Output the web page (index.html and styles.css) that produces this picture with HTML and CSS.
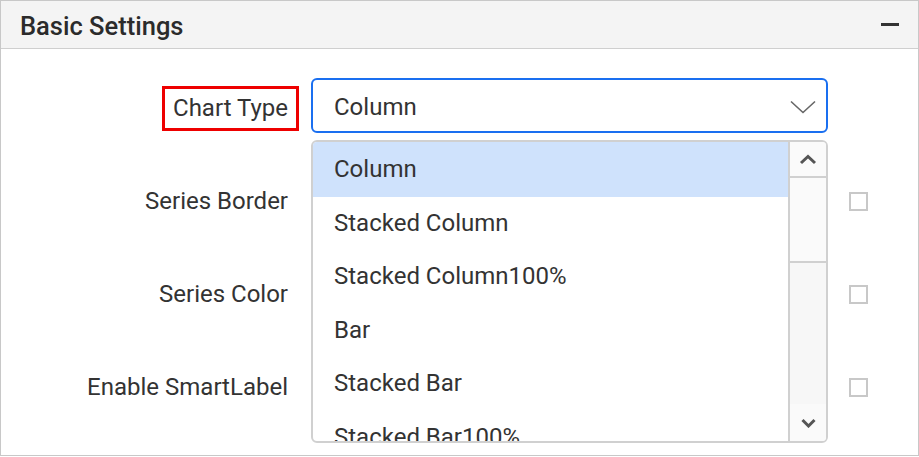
FILE: index.html
```html
<!DOCTYPE html>
<html>
<head>
<meta charset="utf-8">
<link rel="stylesheet" href="styles.css">
</head>
<body>
<div class="panel">
  <div class="panel-header">
    <span class="title">Basic Settings</span>
    <span class="collapse-icon"></span>
  </div>
  <div class="panel-body">
    <div class="row row-first">
      <div class="label-col"><span class="label label-marked">Chart Type</span></div>
      <div class="control">
        <div class="select">
          <span class="select-value">Column</span>
          <svg class="select-arrow" width="26" height="14" viewBox="0 0 26 14"><path d="M1 1.5 L13 12.5 L25 1.5" fill="none" stroke="#666" stroke-width="1.6"/></svg>
        </div>
        <div class="popup">
          <ul class="list">
            <li class="item item-active">Column</li>
            <li class="item">Stacked Column</li>
            <li class="item">Stacked Column100%</li>
            <li class="item">Bar</li>
            <li class="item">Stacked Bar</li>
            <li class="item">Stacked Bar100%</li>
          </ul>
          <div class="scrollbar">
            <div class="sb-btn sb-up">
              <svg width="18" height="11" viewBox="0 0 18 11"><path d="M2 9 L9 2.5 L16 9" fill="none" stroke="#555" stroke-width="3"/></svg>
            </div>
            <div class="sb-thumb"></div>
            <div class="sb-track"></div>
            <div class="sb-btn sb-down">
              <svg width="15" height="10" viewBox="0 0 15 10"><path d="M1.5 2 L7.5 8 L13.5 2" fill="none" stroke="#555" stroke-width="3"/></svg>
            </div>
          </div>
        </div>
      </div>
    </div>
    <div class="row">
      <div class="label-col"><span class="label">Series Border</span></div>
      <div class="control"></div>
      <span class="checkbox"></span>
    </div>
    <div class="row">
      <div class="label-col"><span class="label">Series Color</span></div>
      <div class="control"></div>
      <span class="checkbox"></span>
    </div>
    <div class="row">
      <div class="label-col"><span class="label">Enable SmartLabel</span></div>
      <div class="control"></div>
      <span class="checkbox"></span>
    </div>
  </div>
</div>
</body>
</html>
```
FILE: styles.css
```css
html, body {
  margin: 0;
  padding: 0;
  background: #ffffff;
}
body {
  font-family: Roboto, "Liberation Sans", sans-serif;
  color: #333333;
}
.panel {
  box-sizing: border-box;
  width: 919px;
  height: 456px;
  border: 1px solid #c8c8c8;
  background: #ffffff;
  overflow: hidden;
}
.panel-header {
  box-sizing: border-box;
  height: 48px;
  background: #f4f4f4;
  border-bottom: 1px solid #cfcfcf;
  display: flex;
  align-items: center;
  justify-content: space-between;
  padding: 3px 19px 0 19px;
}
.title {
  font-size: 25.5px;
  font-weight: 500;
  color: #2b2b2b;
}
.collapse-icon {
  display: block;
  width: 18px;
  height: 2.5px;
  background: #333333;
  margin-top: -3px;
}
.panel-body {
  padding-top: 29px;
  display: flex;
  flex-direction: column;
  gap: 38px;
}
.row {
  display: flex;
  align-items: center;
  height: 55px;
}
.row-first {
  margin-bottom: 2.5px;
}
.label-col {
  width: 298px;
  display: flex;
  justify-content: flex-end;
}
.label {
  box-sizing: border-box;
  display: block;
  height: 45px;
  line-height: 39px;
  padding: 0 8px;
  border: 3px solid transparent;
  font-size: 24px;
  color: #333333;
  white-space: nowrap;
}
.label-marked {
  border-color: #ee0000;
  margin-top: 6px;
}
.control {
  position: relative;
  margin-left: 12px;
  width: 517px;
  height: 55px;
}
.select {
  box-sizing: border-box;
  height: 55px;
  border: 2px solid #1a6ff0;
  border-radius: 6px;
  display: flex;
  align-items: center;
  justify-content: space-between;
  padding: 2px 10px 0 21px;
  background: #ffffff;
}
.select-value {
  font-size: 24px;
  color: #333333;
}
.select-arrow {
  display: block;
  margin-top: 0px;
}
.popup {
  position: absolute;
  left: 0;
  top: 62px;
  box-sizing: border-box;
  width: 517px;
  height: 303px;
  border: 2px solid #d0d0d0;
  border-radius: 6px;
  background: #ffffff;
  display: flex;
  overflow: hidden;
  z-index: 2;
}
.list {
  list-style: none;
  margin: 0;
  padding: 1px 0 0 0;
  flex: 1;
  overflow: hidden;
}
.item {
  box-sizing: border-box;
  height: 53.6px;
  line-height: 53.6px;
  padding-left: 21px;
  font-size: 24px;
  color: #333333;
  white-space: nowrap;
}
.item-active {
  background: #cfe2fc;
  margin-top: -1px;
  height: 54.6px;
  padding-top: 1px;
}
.scrollbar {
  width: 36px;
  border-left: 2px solid #d0d0d0;
  background: #f8f8f8;
  display: flex;
  flex-direction: column;
}
.sb-btn {
  height: 34px;
  display: flex;
  align-items: center;
  justify-content: center;
  background: #fafafa;
}
.sb-up {
  border-bottom: 2px solid #d0d0d0;
}
.sb-thumb {
  height: 83px;
  background: #fafafa;
  border-bottom: 2px solid #d0d0d0;
}
.sb-track {
  flex: 1;
  background: #f7f7f7;
}
.sb-down {
  height: 37px;
}
.checkbox {
  box-sizing: border-box;
  display: block;
  width: 19px;
  height: 19px;
  border: 2px solid #c8c8c8;
  margin-left: 21px;
}
```
